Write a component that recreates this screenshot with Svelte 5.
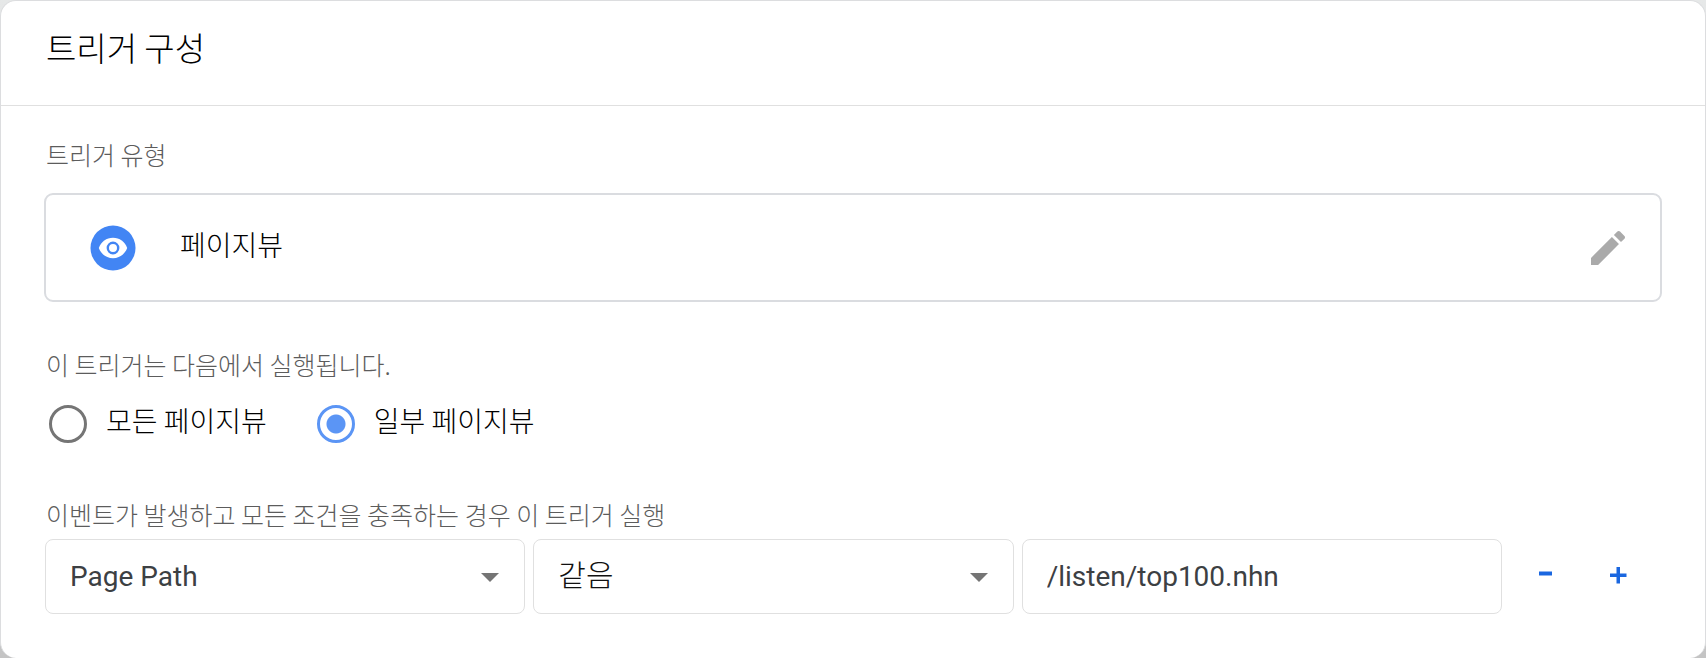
<script>
  let scope = $state('some');
  let variable = $state('Page Path');
  let operator = $state('같음');
  let value = $state('/listen/top100.nhn');
</script>

<main class="card">
  <header>
    <h1>트리거 구성</h1>
  </header>

  <div class="content">
    <h2 class="caption">트리거 유형</h2>
    <section class="type">
      <svg class="badge" viewBox="0 0 46 46" aria-hidden="true">
        <circle cx="23" cy="23" r="22.5" fill="#4285f4" />
        <path d="M23 12.800c-6.600 0-11.900 4.100-14.200 10.200C11.100 29.100 16.400 33.200 23 33.200S34.900 29.100 37.200 23C34.900 16.900 29.600 12.800 23 12.800z" fill="#fff" />
        <circle cx="23" cy="23" r="5.200" fill="#fff" stroke="#4285f4" stroke-width="2.400" />
      </svg>
      <span class="type-name">페이지뷰</span>
      <button class="edit" type="button" aria-label="수정">
        <svg viewBox="3 3 18 18" aria-hidden="true">
          <path d="M3 17.250V21h3.750L17.810 9.940l-3.750-3.750L3 17.250zM20.710 7.040c.390-.390.390-1.020 0-1.410l-2.340-2.340c-.390-.390-1.020-.390-1.410 0l-1.830 1.830 3.750 3.750 1.830-1.830z" fill="#aaa" />
        </svg>
      </button>
    </section>

    <fieldset>
      <legend class="caption">이 트리거는 다음에서 실행됩니다.</legend>
      <div class="radios">
        <label>
          <input type="radio" name="scope" value="all" bind:group={scope} />
          <span>모든 페이지뷰</span>
        </label>
        <label>
          <input type="radio" name="scope" value="some" bind:group={scope} />
          <span>일부 페이지뷰</span>
        </label>
      </div>
    </fieldset>

    <h2 class="caption">이벤트가 발생하고 모든 조건을 충족하는 경우 이 트리거 실행</h2>
    <div class="condition">
      <div class="select">
        <select aria-label="변수" bind:value={variable}>
          <option>Page Path</option>
        </select>
        <svg class="arrow" viewBox="0 0 18 9" aria-hidden="true"><path d="M0 0h18L9 9z" fill="#757575" /></svg>
      </div>
      <div class="select">
        <select class="korean" aria-label="연산자" bind:value={operator}>
          <option>같음</option>
        </select>
        <svg class="arrow" viewBox="0 0 18 9" aria-hidden="true"><path d="M0 0h18L9 9z" fill="#757575" /></svg>
      </div>
      <input class="value" type="text" aria-label="값" bind:value />
      <div class="actions">
        <button type="button" aria-label="조건 삭제">
          <svg viewBox="0 0 18 18" aria-hidden="true"><path d="M2 5.500h13v4H2z" fill="#1a67e0" /></svg>
        </button>
        <button type="button" aria-label="조건 추가">
          <svg viewBox="0 0 18 18" aria-hidden="true"><path d="M7.500 1h3.500v6.500h6.500v3.500h-6.500v6.500h-3.500V11H1V7.500h6.500z" fill="#1a67e0" /></svg>
        </button>
      </div>
    </div>
  </div>
</main>

<style>
  :global(body) {
    margin: 0;
    background: linear-gradient(#e6e8e8, #c4c4c4);
  }

  .card {
    box-sizing: border-box;
    border: 1px solid #dcdddf;
    border-bottom: 0;
    border-radius: 16px;
    background: #fff;
    color: #000;
    font-family: Roboto, "Noto Sans CJK KR", sans-serif;
  }

  header {
    padding: 22px 45px 34px;
    border-bottom: 1px solid #e0e0e0;
  }

  h1 {
    margin: 0;
    font: 300 33px/48px "Noto Sans CJK KR", sans-serif;
  }

  .content {
    padding: 30px 43px 44px;
  }

  .caption {
    margin: 0;
    padding: 0 2px;
    color: #5c5c5c;
    font: 300 25px/36px "Noto Sans CJK KR", sans-serif;
  }

  .type {
    display: flex;
    align-items: center;
    box-sizing: border-box;
    height: 109px;
    margin-top: 21px;
    padding: 0 35px 0 44px;
    border: 2px solid #dadce0;
    border-radius: 9px;
  }

  .badge {
    width: 46px;
    height: 46px;
  }

  .type-name {
    margin-left: 44px;
    padding-bottom: 8px;
    font: 300 28px/40px "Noto Sans CJK KR", sans-serif;
  }

  button {
    display: flex;
    align-items: center;
    justify-content: center;
    padding: 0;
    border: 0;
    background: none;
    cursor: pointer;
  }

  .edit {
    margin-left: auto;
  }

  .edit svg {
    width: 34px;
    height: 34px;
  }

  fieldset {
    margin: 44px 0 48px;
    padding: 0;
    border: 0;
  }

  .radios {
    display: flex;
    gap: 50px;
    padding: 18px 5px 0;
  }

  .radios label {
    display: flex;
    align-items: center;
    gap: 19px;
    cursor: pointer;
  }

  .radios span {
    padding-bottom: 8px;
    font: 300 28px/40px "Noto Sans CJK KR", sans-serif;
  }

  .radios input {
    appearance: none;
    box-sizing: border-box;
    width: 38px;
    height: 38px;
    margin: 0;
    border: 3px solid #757575;
    border-radius: 50%;
  }

  .radios input:checked {
    border-color: #5b95f5;
    background: radial-gradient(circle, #5b95f5 9px, transparent 10px);
  }

  .condition {
    display: grid;
    grid-template-columns: repeat(3, minmax(0, 1fr)) auto;
    gap: 8px;
    margin: 7px 0 0 1px;
  }

  .select {
    display: grid;
    align-items: center;
  }

  .select > * {
    grid-area: 1 / 1;
  }

  select,
  .value {
    appearance: none;
    box-sizing: border-box;
    width: 100%;
    min-width: 0;
    height: 75px;
    margin: 0;
    padding: 0 24px;
    border: 1px solid #e0e0e0;
    border-radius: 8px;
    background: #fff;
    color: #3c4043;
    font: 28px Roboto, "Noto Sans CJK KR", sans-serif;
  }

  select.korean {
    padding-bottom: 8px;
    color: #111;
    font: 300 30px "Noto Sans CJK KR", sans-serif;
  }

  .arrow {
    justify-self: end;
    width: 18px;
    height: 9px;
    margin: 2px 26px 0 0;
    pointer-events: none;
  }

  .actions {
    display: flex;
    padding: 0 8px 4px 0;
  }

  .actions button {
    width: 72px;
  }

  .actions svg {
    width: 18px;
    height: 18px;
  }
</style>
